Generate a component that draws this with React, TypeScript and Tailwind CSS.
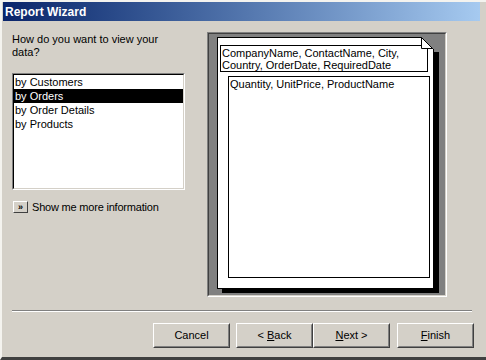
export default function App() {
  const items = ["by Customers", "by Orders", "by Order Details", "by Products"];

  return (
    <div className="w-[486px] h-[360px] bg-[#d4d0c8] flex flex-col border-t-2 border-l-2 border-t-[#f4f3ef] border-l-[#f4f3ef] border-b-[3px] border-b-[#404040] pl-px pr-[6px] font-['Liberation_Sans',Arial,sans-serif] text-[11px] text-black overflow-hidden">
      {/* Title bar */}
      <div className="h-[19px] shrink-0 flex items-center pl-[2px] bg-gradient-to-r from-[#0a246a] to-[#a6caf0]">
        <span className="text-white font-bold text-[12px] leading-none">Report Wizard</span>
      </div>

      {/* Body */}
      <div className="flex h-[276px] shrink-0">
        {/* Left column */}
        <div className="ml-[9px] w-[173px] flex flex-col">
          <p className="mt-[12px] leading-[13px] w-[160px]">How do you want to view your data?</p>
          <div className="mt-[14px] h-[117px] border border-t-[#808080] border-l-[#808080] border-b-white border-r-white">
            <div className="h-full bg-white border border-t-black border-l-black border-b-[#d4d0c8] border-r-[#d4d0c8]">
              {items.map((item) => (
                <div
                  key={item}
                  className={
                    item === "by Orders"
                      ? "h-[14px] leading-[14px] px-px bg-black text-white"
                      : "h-[14px] leading-[14px] px-px"
                  }
                >
                  {item}
                </div>
              ))}
            </div>
          </div>
          <div className="mt-[9px] flex items-center">
            <div className="ml-px w-[15px] h-[12px] border border-t-white border-l-white border-b-[#404040] border-r-[#404040] flex items-center justify-center text-[9px] leading-none font-bold">
              »
            </div>
            <span className="ml-[4px] tracking-[-0.2px]">Show me more information</span>
          </div>
        </div>

        {/* Preview panel */}
        <div className="ml-[22px] mt-[11px] w-[240px] h-[265px] border border-t-[#808080] border-l-[#808080] border-b-white border-r-white">
          <div className="h-full bg-[#808080] border border-t-[#404040] border-l-[#404040] border-b-[#d4d0c8] border-r-[#d4d0c8] pl-[8px] pt-[3px]">
            <div className="relative w-[217px] h-[252px] bg-white border border-black shadow-[5px_4px_0_#000]">
              <svg className="absolute left-[203px] top-[-1px]" width="19" height="15" viewBox="0 0 19 15">
                <polygon points="0,0 19,0 19,15 13,15 13,13" fill="#808080" />
                <line x1="0.5" y1="0.5" x2="13" y2="13" stroke="#000" strokeWidth="1" />
                <polygon points="0.5,0.5 0.5,11.5 11.5,11.5" fill="#fff" stroke="#000" strokeWidth="1" />
              </svg>
              <div className="ml-[2px] mt-[7px] w-[208px] h-[27px] border border-black pl-px pt-px leading-[12px]">
                CompanyName, ContactName, City,
                <br />
                Country, OrderDate, RequiredDate
              </div>
              <div className="ml-[10px] mt-[4px] w-[202px] h-[202px] border border-black pl-px pt-px leading-[12px]">
                Quantity, UnitPrice, ProductName
              </div>
            </div>
          </div>
        </div>
      </div>

      {/* Separator */}
      <div className="ml-[9px] mr-[8px] mt-[13px] border-t border-t-[#808080] border-b border-b-white" />

      {/* Buttons */}
      <div className="mt-[11px] pl-[150px] flex">
        <WizButton>Cancel</WizButton>
        <div className="ml-[6px]">
          <WizButton>
            &lt; <span className="underline">B</span>ack
          </WizButton>
        </div>
        <WizButton>
          <span className="underline">N</span>ext &gt;
        </WizButton>
        <div className="ml-[7px]">
          <WizButton>
            <span className="underline">F</span>inish
          </WizButton>
        </div>
      </div>
    </div>
  );
}

function WizButton({ children }: { children: React.ReactNode }) {
  return (
    <div className="w-[77px] h-[25px] border border-t-white border-l-white border-b-[#404040] border-r-[#404040]">
      <div className="h-full flex items-center justify-center border border-t-[#d4d0c8] border-l-[#d4d0c8] border-b-[#808080] border-r-[#808080]">
        <span>{children}</span>
      </div>
    </div>
  );
}
